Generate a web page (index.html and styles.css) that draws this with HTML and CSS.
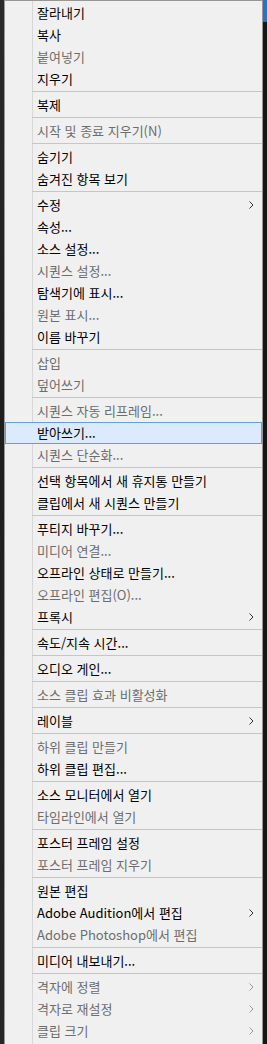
FILE: index.html
```html
<!DOCTYPE html>
<html lang="ko">
<head>
    <meta charset="UTF-8">
    <meta name="viewport" content="width=device-width, initial-scale=1.0">
    <title>컨텍스트 메뉴</title>
    <link rel="stylesheet" href="styles.css">
</head>
<body>
    <div class="screen">
        <div class="edge left"></div>

        <div class="menu">
            <div class="item">잘라내기</div>
            <div class="item">복사</div>
            <div class="item off">붙여넣기</div>
            <div class="item">지우기</div>
            <div class="sep"></div>
            <div class="item">복제</div>
            <div class="sep"></div>
            <div class="item off">시작 및 종료 지우기(N)</div>
            <div class="sep"></div>
            <div class="item">숨기기</div>
            <div class="item">숨겨진 항목 보기</div>
            <div class="sep"></div>
            <div class="item sub">수정</div>
            <div class="item">속성...</div>
            <div class="item">소스 설정...</div>
            <div class="item off">시퀀스 설정...</div>
            <div class="item">탐색기에 표시...</div>
            <div class="item off">원본 표시...</div>
            <div class="item">이름 바꾸기</div>
            <div class="sep"></div>
            <div class="item off">삽입</div>
            <div class="item off">덮어쓰기</div>
            <div class="sep"></div>
            <div class="item off">시퀀스 자동 리프레임...</div>
            <div class="item hover">받아쓰기...</div>
            <div class="item off">시퀀스 단순화...</div>
            <div class="sep"></div>
            <div class="item">선택 항목에서 새 휴지통 만들기</div>
            <div class="item">클립에서 새 시퀀스 만들기</div>
            <div class="sep"></div>
            <div class="item">푸티지 바꾸기...</div>
            <div class="item off">미디어 연결...</div>
            <div class="item">오프라인 상태로 만들기...</div>
            <div class="item off">오프라인 편집(O)...</div>
            <div class="item sub">프록시</div>
            <div class="sep"></div>
            <div class="item">속도/지속 시간...</div>
            <div class="sep"></div>
            <div class="item">오디오 게인...</div>
            <div class="sep"></div>
            <div class="item off">소스 클립 효과 비활성화</div>
            <div class="sep"></div>
            <div class="item sub">레이블</div>
            <div class="sep"></div>
            <div class="item off">하위 클립 만들기</div>
            <div class="item">하위 클립 편집...</div>
            <div class="sep"></div>
            <div class="item">소스 모니터에서 열기</div>
            <div class="item off">타임라인에서 열기</div>
            <div class="sep"></div>
            <div class="item">포스터 프레임 설정</div>
            <div class="item off">포스터 프레임 지우기</div>
            <div class="sep"></div>
            <div class="item">원본 편집</div>
            <div class="item sub">Adobe Audition에서 편집</div>
            <div class="item off">Adobe Photoshop에서 편집</div>
            <div class="sep"></div>
            <div class="item">미디어 내보내기...</div>
            <div class="sep"></div>
            <div class="item off sub">격자에 정렬</div>
            <div class="item off sub">격자로 재설정</div>
            <div class="item off sub">클립 크기</div>
        </div>

        <div class="edge right">
            <div class="blue"></div>
        </div>
    </div>

    <script>
        // add the submenu chevron to every item that opens a submenu
        document.querySelectorAll('.item.sub').forEach(item => {
            item.insertAdjacentHTML('beforeend',
                '<svg class="arrow" width="5" height="8" viewBox="0 0 5 8">' +
                '<polyline points="0.5,0.5 4,4 0.5,7.5" fill="none" stroke="currentColor" stroke-width="1"/></svg>');
        });
    </script>
</body>
</html>
```

FILE: styles.css
```css
html, body {
    margin: 0;
    padding: 0;
    background: #1b1b1b;
    height: 100%;
    overflow: hidden;
}
.screen {
    display: flex;
    height: 1044px;
}
.edge {
    width: 4px;
    flex-shrink: 0;
}
.edge.left {
    background: linear-gradient(#2a2a2a, #1e1e1e 40%, #262626);
}
.edge.right {
    background: #161616;
}
.edge.right .blue {
    height: 22px;
    background: #2f6fbf;
}
.menu {
    width: 257px;
    flex-shrink: 0;
    border: 1px solid #979797;
    border-bottom: none;
    padding-top: 1px;
    background: linear-gradient(to right, #f0f0f0 27px, #d7d7d7 27px, #d7d7d7 28px, #f0f0f0 28px);
    font-family: "Noto Sans CJK KR", "Noto Sans", sans-serif;
    font-size: 13px;
    color: #000;
    overflow: hidden;
}
.item {
    position: relative;
    height: 22px;
    line-height: 22px;
    padding-left: 32px;
    white-space: nowrap;
    box-sizing: border-box;
}
.item.off {
    color: #6d6d6d;
}
.item.hover {
    background: #dcebfb;
    border: 1px solid #5ca2da;
    line-height: 20px;
    padding-left: 31px;
}
.arrow {
    position: absolute;
    right: 8px;
    top: 7px;
    color: #333;
}
.item.off .arrow {
    color: #9a9a9a;
}
.sep {
    height: 4px;
    margin-left: 27px;
    box-sizing: border-box;
    position: relative;
}
.sep::after {
    content: "";
    position: absolute;
    left: 0;
    right: 0;
    top: 1px;
    border-top: 1px solid #c6c6c6;
}
```
